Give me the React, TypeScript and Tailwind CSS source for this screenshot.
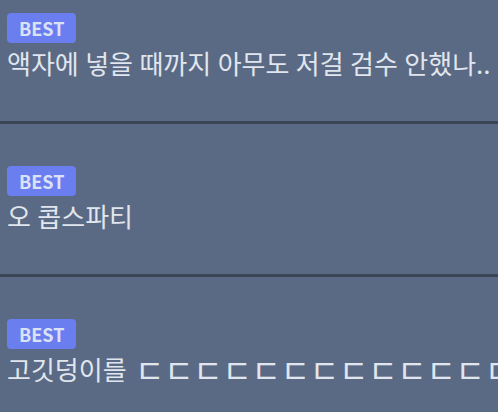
import React from "react";

const items: { text: string; tail?: string }[] = [
  { text: "액자에 넣을 때까지 아무도 저걸 검수 안했나.." },
  { text: "오 콥스파티" },
  { text: "고깃덩이를 ", tail: "ㄷㄷㄷㄷㄷㄷㄷㄷㄷㄷㄷㄷㄷㄷㄷㄷ" },
];

export default function App() {
  return (
    <div
      className="w-[498px] h-[412px] overflow-hidden bg-[#5a6a84]"
      style={{ fontFamily: '"Noto Sans CJK KR", "Noto Sans", sans-serif' }}
    >
      {items.map((t, i) => (
        <div
          key={i}
          className={
            (i === 0 ? "pt-[13px] " : "pt-[42px] ") +
            "pb-[42px] pl-[7px] border-b-[3px] border-[#3b4556] flex flex-col items-start"
          }
        >
          <div className="h-[30px] px-[12px] rounded-[4px] bg-[#6b7ef0] flex items-center text-[18px] font-bold text-[#dce2f6] leading-none">
            BEST
          </div>
          <div className="mt-[4px] text-[26px] leading-[32px] [word-spacing:0.6px] text-[#e1e6ee] whitespace-nowrap">
            {t.text}
            {t.tail && (
              <span className="ml-[2px] text-[32px] tracking-[-0.3px] [word-spacing:0px] [vertical-align:-3px]">
                {t.tail}
              </span>
            )}
          </div>
        </div>
      ))}
    </div>
  );
}
